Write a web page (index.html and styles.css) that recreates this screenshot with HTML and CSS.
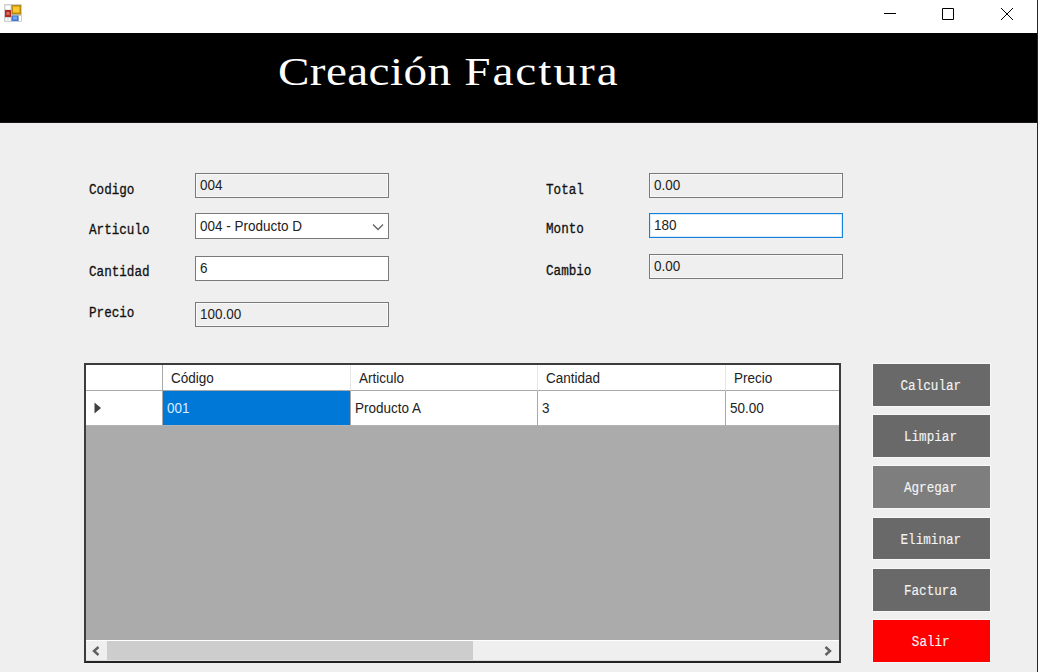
FILE: index.html
```html
<!DOCTYPE html>
<html lang="es">
<head>
<meta charset="utf-8">
<title>Creación Factura</title>
<link rel="stylesheet" href="styles.css">
</head>
<body>
<div class="window">
  <div class="titlebar">
    <svg class="app-icon" width="18" height="18" viewBox="0 0 18 18">
      <rect width="18" height="18" rx="1" fill="#cfcfcf"/>
      <rect x="1.5" y="1.5" width="5" height="4" fill="#fff"/>
      <rect x="1" y="6" width="6" height="7" fill="#b22a20"/>
      <rect x="2.5" y="8" width="3" height="3" fill="#dc6c60"/>
      <rect x="1.5" y="14" width="2" height="3" fill="#fff"/>
      <rect x="4.500" y="14" width="2" height="3" fill="#fff"/>
      <rect x="7.500" y="1" width="9.500" height="9.500" fill="#b88a10"/>
      <rect x="9" y="2.500" width="6.500" height="6" fill="#fbc72c"/>
      <rect x="7.500" y="11.500" width="7" height="5.500" fill="#3f78d4"/>
      <rect x="9" y="12.500" width="4" height="3" fill="#76a5ee"/>
      <rect x="15" y="12" width="2" height="5" fill="#fff"/>
    </svg>
    <svg class="controls" width="132" height="14" viewBox="0 0 132 14" fill="none" stroke="#000">
      <path d="M1 6.500H13M59.500 1.500H70.500V12.500H59.500ZM118 1L130 13M130 1L118 13"/>
    </svg>
  </div>
  <header class="banner"><h1 class="banner-title">Creación <span class="wide">Factura</span></h1></header>
  <main class="content">
    <section class="form">
      <div class="fields">
        <div class="row"><label class="label"><span class="mono">Codigo</span></label><div class="field readonly"><span class="ui">004</span></div></div>
        <div class="row row-articulo"><label class="label"><span class="mono">Articulo</span></label><div class="field select"><span class="ui">004 - Producto D</span><svg class="chevron" width="12" height="8" viewBox="0 0 12 8"><path d="M1 1.500L6 6.500L11 1.500" fill="none" stroke="#666" stroke-width="1.400"/></svg></div></div>
        <div class="row row-cantidad"><label class="label"><span class="mono">Cantidad</span></label><div class="field"><span class="ui">6</span></div></div>
        <div class="row row-precio"><label class="label"><span class="mono">Precio</span></label><div class="field readonly"><span class="ui">100.00</span></div></div>
      </div>
      <div class="fields totals">
        <div class="row"><label class="label"><span class="mono">Total</span></label><div class="field readonly"><span class="ui">0.00</span></div></div>
        <div class="row row-monto"><label class="label"><span class="mono">Monto</span></label><div class="field focused"><span class="ui">180</span></div></div>
        <div class="row row-cambio"><label class="label"><span class="mono">Cambio</span></label><div class="field readonly"><span class="ui">0.00</span></div></div>
      </div>
    </section>
    <section class="lower">
      <div class="table">
        <div class="tr thead">
          <div class="td"></div><div class="td"><span class="ui">Código</span></div><div class="td"><span class="ui">Articulo</span></div><div class="td"><span class="ui">Cantidad</span></div><div class="td"><span class="ui">Precio</span></div>
        </div>
        <div class="tr tbody">
          <div class="td marker"><svg width="8" height="12" viewBox="0 0 8 12"><path d="M0.500 0.500L7 6L0.500 11.500Z" fill="#404040"/></svg></div><div class="td selected"><span class="ui">001</span></div><div class="td"><span class="ui">Producto A</span></div><div class="td"><span class="ui">3</span></div><div class="td"><span class="ui">50.00</span></div>
        </div>
        <div class="empty"></div>
        <div class="scrollbar">
          <svg class="arrow" width="10" height="10" viewBox="0 0 10 10"><path d="M7.500 1L3 5L7.500 9" fill="none" stroke="#606060" stroke-width="2.400"/></svg>
          <div class="thumb"></div>
          <svg class="arrow arrow-right" width="10" height="10" viewBox="0 0 10 10"><path d="M2.500 1L7 5L2.500 9" fill="none" stroke="#606060" stroke-width="2.400"/></svg>
        </div>
      </div>
      <div class="actions">
        <button class="btn"><span class="mono">Calcular</span></button>
        <button class="btn"><span class="mono">Limpiar</span></button>
        <button class="btn hover"><span class="mono">Agregar</span></button>
        <button class="btn"><span class="mono">Eliminar</span></button>
        <button class="btn"><span class="mono">Factura</span></button>
        <button class="btn danger"><span class="mono">Salir</span></button>
      </div>
    </section>
  </main>
</div>
</body>
</html>
```
FILE: styles.css
```css
* { box-sizing: border-box; }
body { margin: 0; background: #efefef; overflow: hidden; }
.window { width: 1038px; height: 672px; border-right: 1px solid #2b2622; background: #efefef; display: flex; flex-direction: column; }
.titlebar { height: 33px; flex: none; background: #fff; display: flex; justify-content: space-between; padding: 4px 22px 0 4px; }
.controls { margin-top: 3px; flex: none; }
.banner { height: 90px; flex: none; background: #000; border-bottom: 1px solid #1b1515; padding: 14px 0 0 278px; }
.banner-title { margin: 0; width: max-content; color: #fff; font: 400 41px/48px "Liberation Serif", serif; letter-spacing: 0.35px; word-spacing: 0.5px; transform: scaleX(1.15); transform-origin: 0 0; }
.wide { letter-spacing: 1.75px; }
.content { flex: 1; padding: 50px 0 0 84px; }
.form { height: 190px; display: flex; }
.fields { width: 456px; padding-left: 5px; display: flex; flex-direction: column; }
.totals { padding-left: 6px; }
.row { display: flex; height: 25px; }
.label { width: 106px; padding-top: 6px; color: #111; line-height: 20px; }
.mono { display: inline-block; font-family: "Liberation Mono", monospace; font-size: 14.5px; line-height: 20px; -webkit-text-stroke: 0.3px currentColor; transform: scaleX(0.87); transform-origin: 0 50%; }
.row-cantidad .label { padding-top: 5px; }
.row-articulo .label { padding-top: 6px; }
.totals .label { width: 103px; }
.field { width: 194px; height: 25px; border: 1px solid #7a7a7a; background: #fff; padding: 0 10px 0 4px; display: flex; justify-content: space-between; line-height: 22px; }
.readonly { background: #efefef; box-shadow: inset 0 0 0 1px #f8f8f8; }
.focused { border-color: #1482dc; box-shadow: inset 0 0 0 1px #d5eafa; }
.select { height: 26px; padding-right: 4px; line-height: 23px; }
.chevron { margin-top: 9px; }
.row-articulo { margin-top: 15px; }
.row-cantidad { margin-top: 18px; }
.row-precio { margin-top: 21px; }
.row-precio .label { padding-top: 0; }
.row-monto { margin-top: 15px; }
.row-monto .label { padding-top: 5px; }
.row-cambio { margin-top: 16px; }
.ui { display: inline-block; white-space: nowrap; color: #222; font-family: "Liberation Sans", sans-serif; font-size: 15.5px; transform: scaleX(0.87); transform-origin: 0 50%; }
.lower { display: flex; gap: 32px; }
.table { width: 757px; height: 300px; border: 2px solid #3c3c3c; border-bottom-color: #222; background: #ababab; display: flex; flex-direction: column; overflow: hidden; }
.tr { display: grid; grid-template-columns: 77px 188px 187px 188px 1fr; grid-template-rows: 100%; background: #fff; flex: none; }
.td { border-right: 1px solid #a8a8a8; border-bottom: 1px solid #b4b4b4; }
.td:last-child { border-right: 0; }
.thead { height: 26px; line-height: 26px; }
.thead .td { padding-left: 8px; border-right-color: #e6e6e6; border-bottom-color: #a8a8a8; }
.thead .td:first-child { border-right-color: #a8a8a8; }
.tbody { height: 35px; line-height: 34px; }
.tbody .td { padding-left: 4px; }
.tbody .marker { padding: 11px 0 0 8px; line-height: 0; }
.selected { background: #0078d7; }
.selected .ui { color: #dbeeff; }
.empty { flex: 1; }
.scrollbar { height: 21px; flex: none; background: #efefef; border-top: 1px solid #fff; border-bottom: 1px solid #ddd; display: flex; }
.arrow { margin: 5px 6px 0 5px; flex: none; }
.thumb { width: 366px; background: #cdcdcd; }
.arrow-right { margin-left: auto; }
.actions { width: 117px; padding-top: 1px; display: flex; flex-direction: column; gap: 9.6px; }
.btn { height: 41.65px; border: 0; padding: 2px 2px 0 0; background: #696969; color: #f4f4f4; line-height: 20px; box-shadow: 0 0 0 1px #f8f8f8; }
.btn .mono { transform-origin: 50% 50%; -webkit-text-stroke-width: 0.15px; }
.hover { background: #7e7e7e; }
.danger { background: #f00; }
```
